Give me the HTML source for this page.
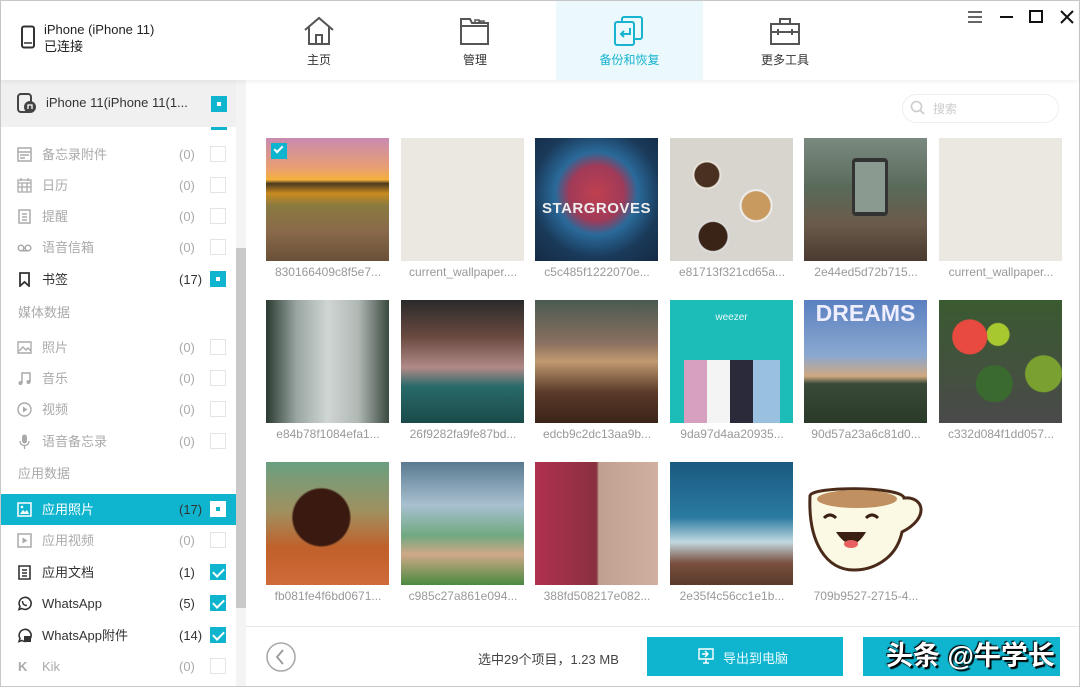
<!DOCTYPE html>
<html><head><meta charset="utf-8"><style>
*{margin:0;padding:0;box-sizing:border-box}
body{width:1080px;height:687px;overflow:hidden;background:#fff;font-family:"Liberation Sans","Noto Sans CJK SC",sans-serif;position:relative}
.abs{position:absolute}
.win{position:absolute;left:0;top:0;width:1080px;height:687px;border:1px solid #c8c8c8}
.top{position:absolute;left:1px;top:1px;width:1077px;height:79px;background:#fff;box-shadow:0 2px 4px rgba(0,0,0,.06);z-index:2}
.tab{position:absolute;top:0;height:79px;text-align:center;font-size:12px;color:#333}
.tab span{position:absolute;left:0;right:0;top:50px}
.side{position:absolute;left:1px;top:80px;width:235px;height:606px;background:#fff}
.row{position:absolute;left:0;width:235px;height:31px;font-size:13px;color:#aaa;line-height:31px}
.row .ic{position:absolute;left:16px;top:8px;width:15px;height:15px}
.row .t{position:absolute;left:41px;top:0;height:31px}
.row .n{position:absolute;left:178px;top:0;height:31px}
.row .cb{position:absolute;left:209px;top:7px;width:16px;height:16px;border:1px solid #e4e4e4;background:#fff}
.dark{color:#333}
.cb.on{background:#0fb5cf;border-color:#0fb5cf}
.cb.sq::after{content:"";position:absolute;left:5px;top:5px;width:4px;height:4px;background:#fff}
.cb.ck::after{content:"";position:absolute;left:4px;top:1px;width:5px;height:9px;border:solid #fff;border-width:0 2px 2px 0;transform:rotate(45deg)}
.sec{position:absolute;left:17px;font-size:13px;color:#aaa;line-height:20px}
.th{position:absolute;width:123px;height:123px}
.lb{position:absolute;width:130px;text-align:center;font-size:12px;color:#999}
</style></head><body>
<div class="win"></div>
<div class="top">
 <svg class="abs" style="left:19px;top:24px" width="16" height="24" viewBox="0 0 16 24"><rect x="2" y="1.5" width="12" height="21" rx="2" fill="none" stroke="#333" stroke-width="2"/><line x1="4" y1="18" x2="12" y2="18" stroke="#333" stroke-width="1.5"/></svg>
 <div class="abs" style="left:43px;top:20px;font-size:13px;color:#222;line-height:17px">iPhone (iPhone 11)<br>已连接</div>
 <div class="tab" style="left:240px;width:156px"><svg class="abs" style="left:62px;top:15px" width="32" height="30" viewBox="0 0 32 30"><path d="M2 14L16 2 30 14M6 11V28H26V11M13 28V19H19V28" fill="none" stroke="#555" stroke-width="2"/></svg><span>主页</span></div>
 <div class="tab" style="left:396px;width:156px"><svg class="abs" style="left:62px;top:15px" width="32" height="30" viewBox="0 0 32 30"><path d="M2 28V3H11L13 7H29V28Z M2 10H29" fill="none" stroke="#555" stroke-width="2"/><path d="M16 7V4H20V7M21 7V5H25V7" fill="none" stroke="#555" stroke-width="1.5"/></svg><span>管理</span></div>
 <div class="tab" style="left:555px;width:147px;background:#ebf9fc;color:#17b3cf"><svg class="abs" style="left:57px;top:15px" width="32" height="30" viewBox="0 0 32 30"><rect x="9" y="1" width="20" height="22" rx="2" fill="none" stroke="#17b3cf" stroke-width="2"/><rect x="2" y="6" width="19" height="23" rx="2" fill="#ebf9fc" stroke="#17b3cf" stroke-width="2"/><path d="M17 12V18H8M11 15L8 18 11 21" fill="none" stroke="#17b3cf" stroke-width="2"/></svg><span>备份和恢复</span></div>
 <div class="tab" style="left:702px;width:164px"><svg class="abs" style="left:66px;top:15px" width="32" height="30" viewBox="0 0 32 30"><path d="M2 8H30V28H2Z M11 8V3H21V8 M2 16H30 M9 13V19 M23 13V19" fill="none" stroke="#555" stroke-width="2"/></svg><span>更多工具</span></div>
 <svg class="abs" style="left:966px;top:8px" width="110" height="16" viewBox="0 0 110 16"><path d="M1 3H15M1 8H15M1 13H15" stroke="#333" stroke-width="1.6"/><path d="M33 8H46" stroke="#111" stroke-width="2"/><rect x="63" y="2" width="12" height="11" fill="none" stroke="#111" stroke-width="2"/><path d="M94 2L106 14M106 2L94 14" stroke="#111" stroke-width="2"/></svg>
</div>

<div class="side">
 <div class="abs" style="left:0;top:0;width:235px;height:47px;background:#f0f0f0"></div>
 <svg class="abs" style="left:16px;top:13px" width="20" height="21" viewBox="0 0 20 21"><rect x="1" y="1" width="13" height="18" rx="3" fill="none" stroke="#444" stroke-width="2"/><circle cx="13" cy="14" r="6" fill="#444"/><path d="M11 16V12H15V16" stroke="#fff" stroke-width="1.3" fill="none"/></svg>
 <div class="abs" style="left:45px;top:14px;font-size:13px;color:#333;line-height:18px">iPhone 11(iPhone 11(1...</div>
 <div class="abs" style="left:210px;top:16px;width:16px;height:16px;background:#0fb5cf"><div class="abs" style="left:6px;top:6px;width:4px;height:4px;background:#fff"></div></div>
 <div class="abs" style="left:210px;top:47px;width:16px;height:3px;background:#0fb5cf"></div>

 <div class="row" style="top:59px"><svg class="ic" viewBox="0 0 15 15"><path d="M1 1H14V14H1ZM1 5H14M3 8H12M3 11H8" fill="none" stroke="#aaa" stroke-width="1.5"/></svg><span class="t">备忘录附件</span><span class="n">(0)</span><span class="cb"></span></div>
 <div class="row" style="top:90px"><svg class="ic" viewBox="0 0 15 15"><path d="M1 2H14V14H1ZM1 5H14M4 0V3M11 0V3M5 5V14M10 5V14M1 9H14" fill="none" stroke="#aaa" stroke-width="1.3"/></svg><span class="t">日历</span><span class="n">(0)</span><span class="cb"></span></div>
 <div class="row" style="top:121px"><svg class="ic" viewBox="0 0 15 15"><path d="M2 1H13V14H2ZM5 5H10M5 8H10M5 11H10" fill="none" stroke="#aaa" stroke-width="1.5"/></svg><span class="t">提醒</span><span class="n">(0)</span><span class="cb"></span></div>
 <div class="row" style="top:152px"><svg class="ic" viewBox="0 0 15 15"><circle cx="4" cy="8" r="2.8" fill="none" stroke="#aaa" stroke-width="1.5"/><circle cx="11" cy="8" r="2.8" fill="none" stroke="#aaa" stroke-width="1.5"/><path d="M4 10.8H11" stroke="#aaa" stroke-width="1.5"/></svg><span class="t">语音信箱</span><span class="n">(0)</span><span class="cb"></span></div>
 <div class="row dark" style="top:184px"><svg class="ic" viewBox="0 0 15 15"><path d="M3 1H12V14L7.5 10 3 14Z" fill="none" stroke="#333" stroke-width="1.8"/></svg><span class="t">书签</span><span class="n">(17)</span><span class="cb on sq"></span></div>
 <div class="sec" style="top:223px">媒体数据</div>
 <div class="row" style="top:252px"><svg class="ic" viewBox="0 0 15 15"><path d="M1 2H14V13H1ZM2 11L6 7 9 10 11 8 14 11" fill="none" stroke="#aaa" stroke-width="1.4"/></svg><span class="t">照片</span><span class="n">(0)</span><span class="cb"></span></div>
 <div class="row" style="top:283px"><svg class="ic" viewBox="0 0 15 15"><path d="M5 12V2H13V11" fill="none" stroke="#aaa" stroke-width="1.5"/><circle cx="3.5" cy="12" r="2" fill="#aaa"/><circle cx="11.5" cy="11" r="2" fill="#aaa"/></svg><span class="t">音乐</span><span class="n">(0)</span><span class="cb"></span></div>
 <div class="row" style="top:314px"><svg class="ic" viewBox="0 0 15 15"><circle cx="7.5" cy="7.5" r="6.5" fill="none" stroke="#aaa" stroke-width="1.4"/><path d="M6 4.5V10.5L10.5 7.5Z" fill="#aaa"/></svg><span class="t">视频</span><span class="n">(0)</span><span class="cb"></span></div>
 <div class="row" style="top:346px"><svg class="ic" viewBox="0 0 15 15"><rect x="5" y="0.5" width="5" height="9" rx="2.5" fill="#aaa"/><path d="M3 7C3 13 12 13 12 7M7.5 11V15" fill="none" stroke="#aaa" stroke-width="1.3"/></svg><span class="t">语音备忘录</span><span class="n">(0)</span><span class="cb"></span></div>
 <div class="sec" style="top:384px">应用数据</div>
 <div class="abs" style="left:0;top:414px;width:235px;height:31px;background:#0fb5cf"></div>
 <div class="row" style="top:414px;color:#fff"><svg class="ic" viewBox="0 0 15 15"><path d="M1 1H14V14H1Z" fill="none" stroke="#fff" stroke-width="1.5"/><path d="M3 12L6 8 8 10 10 8 12 12Z" fill="#fff"/><circle cx="5" cy="5" r="1.3" fill="#fff"/></svg><span class="t">应用照片</span><span class="n" style="color:#333">(17)</span><span class="cb" style="border-color:#fff"></span></div>
 <div class="abs" style="left:215px;top:427px;width:4px;height:4px;background:#0fb5cf"></div>
 <div class="row" style="top:445px"><svg class="ic" viewBox="0 0 15 15"><path d="M1 1H14V14H1Z" fill="none" stroke="#aaa" stroke-width="1.5"/><path d="M5.5 4.5V10.5L10.5 7.5Z" fill="#aaa"/></svg><span class="t">应用视频</span><span class="n">(0)</span><span class="cb"></span></div>
 <div class="row dark" style="top:477px"><svg class="ic" viewBox="0 0 15 15"><path d="M2 1H13V14H2ZM5 5H10M5 8H10M5 11H10" fill="none" stroke="#333" stroke-width="1.6"/></svg><span class="t">应用文档</span><span class="n">(1)</span><span class="cb on ck"></span></div>
 <div class="row dark" style="top:508px"><svg class="ic" viewBox="0 0 15 15"><path d="M2 13.5L3 10.5A6 6 0 1 1 5 12.5Z" fill="none" stroke="#333" stroke-width="1.6"/><path d="M5.5 5C5.5 8 7 9.5 10 9.5" fill="none" stroke="#333" stroke-width="1.4"/></svg><span class="t">WhatsApp</span><span class="n">(5)</span><span class="cb on ck"></span></div>
 <div class="row dark" style="top:540px"><svg class="ic" viewBox="0 0 15 15"><path d="M2 13.5L3 10.5A6 6 0 1 1 5 12.5Z" fill="none" stroke="#333" stroke-width="1.6"/><rect x="7" y="8" width="7" height="6" fill="#333"/></svg><span class="t">WhatsApp附件</span><span class="n">(14)</span><span class="cb on ck"></span></div>
 <div class="row" style="top:571px"><span class="abs" style="left:17px;top:0;font-weight:bold;color:#aaa">K</span><span class="t">Kik</span><span class="n">(0)</span><span class="cb"></span></div>
</div>
<div class="abs" style="left:236px;top:80px;width:10px;height:606px;background:#f4f4f4"></div>
<div class="abs" style="left:236px;top:248px;width:10px;height:360px;background:#c9c9c9"></div>

<div class="abs" style="left:902px;top:94px;width:157px;height:29px;border:1px solid #eee;border-radius:15px"></div>
<svg class="abs" style="left:910px;top:100px" width="16" height="16" viewBox="0 0 16 16"><circle cx="6.5" cy="6.5" r="5" fill="none" stroke="#ccc" stroke-width="1.6"/><path d="M10 10L14 14" stroke="#ccc" stroke-width="1.8"/></svg>
<div class="abs" style="left:933px;top:100px;font-size:12px;color:#ccc">搜索</div>

<div class="th" style="left:266px;top:138px;background:linear-gradient(180deg,#c98ab0 0%,#e9a070 25%,#f4b03a 34%,#4a3a20 37%,#c88a20 45%,#8a7a40 55%,#8a6a4a 75%,#6a5038 100%)"></div>
<div class="abs" style="left:271px;top:143px;width:16px;height:16px;background:#0fb5cf"><div class="abs" style="left:5px;top:1px;width:5px;height:9px;border:solid #fff;border-width:0 2px 2px 0;transform:rotate(45deg)"></div></div>
<div class="th" style="left:401px;top:138px;background:#ebe8e2"></div>
<div class="th" style="left:535px;top:138px;background:radial-gradient(circle at 50% 45%,#c04050 0%,#a03a58 30%,#2a6a9a 45%,#1a3a5a 70%,#142a44 100%)"><div class="abs" style="left:0;right:0;top:62px;text-align:center;color:#eee;font-size:15px;font-weight:bold;letter-spacing:.5px">STARGROVES</div></div>
<div class="th" style="left:670px;top:138px;background:radial-gradient(circle at 30% 30%,#4a3020 0 12px,#e8e2da 13px 14px,transparent 15px),radial-gradient(circle at 70% 55%,#c89a60 0 14px,#eee 15px 16px,transparent 17px),radial-gradient(circle at 35% 80%,#3a2418 0 14px,#ddd 15px 16px,transparent 17px),#d8d4ce"></div>
<div class="th" style="left:804px;top:138px;background:linear-gradient(180deg,#7a8a80 0%,#5a6a5a 40%,#6a5a4a 70%,#4a3a30 100%)"><div class="abs" style="left:48px;top:20px;width:36px;height:58px;background:#333;border-radius:4px"></div><div class="abs" style="left:51px;top:24px;width:30px;height:50px;background:#8a9a90"></div></div>
<div class="th" style="left:939px;top:138px;background:#ebe8e2"></div>
<div class="lb" style="left:263px;top:265px">830166409c8f5e7...</div>
<div class="lb" style="left:398px;top:265px">current_wallpaper....</div>
<div class="lb" style="left:532px;top:265px">c5c485f1222070e...</div>
<div class="lb" style="left:667px;top:265px">e81713f321cd65a...</div>
<div class="lb" style="left:801px;top:265px">2e44ed5d72b715...</div>
<div class="lb" style="left:936px;top:265px">current_wallpaper...</div>

<div class="th" style="left:266px;top:300px;background:linear-gradient(90deg,#2a3a30 0%,#9aa6a2 25%,#cfd6d4 50%,#b0b8b4 75%,#3a4a40 100%)"></div>
<div class="th" style="left:401px;top:300px;background:linear-gradient(180deg,#2a2a2a 0%,#6a4a40 30%,#b08a88 55%,#2a6a6a 70%,#1a4a4a 100%)"></div>
<div class="th" style="left:535px;top:300px;background:linear-gradient(180deg,#4a5a50 0%,#8a7060 35%,#c09a70 50%,#5a3a28 75%,#3a2418 100%)"></div>
<div class="th" style="left:670px;top:300px;background:#1cbdb8"><div class="abs" style="left:0;right:0;top:12px;text-align:center;color:#e8f8f8;font-size:10px">weezer</div><div class="abs" style="left:14px;top:60px;width:96px;height:63px;background:linear-gradient(90deg,#d8a0c0 0 24%,#f4f4f4 24% 48%,#2a2a3a 48% 72%,#9ac0e0 72%)"></div></div>
<div class="th" style="left:804px;top:300px;background:linear-gradient(180deg,#5a80c0 0%,#8aa8d0 45%,#d0a880 62%,#3a4a38 68%,#2a3a28 100%)"><div class="abs" style="left:0;right:0;top:0;text-align:center;color:#eef;font-size:23px;font-weight:bold">DREAMS</div></div>
<div class="th" style="left:939px;top:300px;background:radial-gradient(circle at 25% 30%,#e84a40 0 17px,transparent 18px),radial-gradient(circle at 48% 28%,#a8c830 0 11px,transparent 12px),radial-gradient(circle at 45% 68%,#3a6a30 0 18px,transparent 19px),radial-gradient(circle at 85% 60%,#7aa030 0 18px,transparent 19px),linear-gradient(180deg,#3a5a30,#4a4a4a)"></div>
<div class="lb" style="left:263px;top:427px">e84b78f1084efa1...</div>
<div class="lb" style="left:398px;top:427px">26f9282fa9fe87bd...</div>
<div class="lb" style="left:532px;top:427px">edcb9c2dc13aa9b...</div>
<div class="lb" style="left:667px;top:427px">9da97d4aa20935...</div>
<div class="lb" style="left:801px;top:427px">90d57a23a6c81d0...</div>
<div class="lb" style="left:936px;top:427px">c332d084f1dd057...</div>

<div class="th" style="left:266px;top:462px;background:radial-gradient(circle at 45% 45%,#3a1a10 0 28px,transparent 30px),linear-gradient(180deg,#6aa080 0%,#a09060 40%,#c0602a 70%,#d06a3a 100%)"></div>
<div class="th" style="left:401px;top:462px;background:linear-gradient(180deg,#5a7a90 0%,#a8c0d0 35%,#70a880 60%,#d0a888 75%,#4a8a40 100%)"></div>
<div class="th" style="left:535px;top:462px;background:linear-gradient(90deg,#b03050 0%,#8a3040 50%,#c0a090 52%,#d0b0a0 100%)"></div>
<div class="th" style="left:670px;top:462px;background:linear-gradient(180deg,#1a5a80 0%,#2a7aa0 45%,#c0d8e0 65%,#7a5040 82%,#5a3a2a 100%)"></div>
<svg class="abs" style="left:806px;top:482px" width="120" height="90" viewBox="0 0 120 90"><path d="M4 14C4 4 96 4 98 16C118 14 124 36 96 50C90 78 66 88 48 88C20 88 2 60 4 14Z" fill="#fbf8e4" stroke="#4a2a18" stroke-width="3"/><ellipse cx="51" cy="17" rx="40" ry="9" fill="#c09060"/><path d="M18 36Q24 30 30 36M60 36Q66 30 72 36" fill="none" stroke="#3a2010" stroke-width="3"/><path d="M30 50Q46 74 60 50Z" fill="#3a2010"/><ellipse cx="45" cy="62" rx="7" ry="4" fill="#e86060"/></svg>
<div class="lb" style="left:263px;top:589px">fb081fe4f6bd0671...</div>
<div class="lb" style="left:398px;top:589px">c985c27a861e094...</div>
<div class="lb" style="left:532px;top:589px">388fd508217e082...</div>
<div class="lb" style="left:667px;top:589px">2e35f4c56cc1e1b...</div>
<div class="lb" style="left:801px;top:589px">709b9527-2715-4...</div>

<div class="abs" style="left:246px;top:626px;width:833px;height:1px;background:#e8e8e8"></div>
<svg class="abs" style="left:265px;top:641px" width="32" height="32" viewBox="0 0 32 32"><circle cx="16" cy="16" r="14" fill="none" stroke="#aaa" stroke-width="1.6"/><path d="M18 9L12 16 18 23" fill="none" stroke="#999" stroke-width="1.8"/></svg>
<div class="abs" style="left:478px;top:649px;font-size:13px;color:#444">选中29个项目，1.23 MB</div>
<div class="abs" style="left:647px;top:637px;width:196px;height:39px;background:#0fb5cf"></div>
<svg class="abs" style="left:698px;top:648px" width="16" height="16" viewBox="0 0 16 16"><path d="M1 1H15V11H1ZM5 15H11M8 11V15M4 6H10M7 3L10 6 7 9" fill="none" stroke="#fff" stroke-width="1.4"/></svg>
<div class="abs" style="left:723px;top:648px;font-size:13px;color:#e8fbff">导出到电脑</div>
<div class="abs" style="left:863px;top:637px;width:197px;height:39px;background:#0fb5cf"></div>
<div class="abs" style="left:886px;top:634px;font-size:27px;color:#fff;font-weight:bold;text-shadow:2px 2px 1px #000,-1px -1px 1px #000">头条 @牛学长</div>
</body></html>
